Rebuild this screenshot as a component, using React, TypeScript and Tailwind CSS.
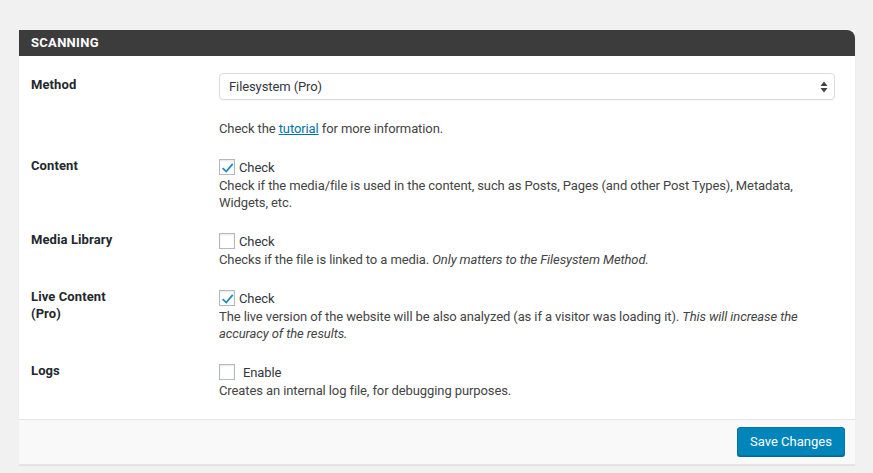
import React from "react";

const font = { fontFamily: 'Roboto, "Noto Sans", "Liberation Sans", sans-serif' };

function Box({ checked }: { checked?: boolean }) {
  return (
    <span className="relative inline-block w-[16px] h-[16px] border border-[#b4b9be] bg-white shadow-[inset_0_1px_2px_rgba(0,0,0,0.1)] shrink-0">
      {checked && (
        <svg viewBox="0 0 20 20" className="absolute left-[-2px] top-[-2px] w-[19px] h-[19px]">
          <path d="M14.8 5.6 8.6 12.9 5.4 10 4.2 11.4 8.8 15.6 16.2 6.9z" fill="#1e8cbe" />
        </svg>
      )}
    </span>
  );
}

function Row({ label, children }: { label: React.ReactNode; children: React.ReactNode }) {
  return (
    <div className="flex">
      <div className="w-[200px] pl-[12px] shrink-0 text-[13px] leading-[17px] font-bold tracking-[0.1px] text-[#23282d]">{label}</div>
      <div className="flex-1 pr-[20px] text-[13px] leading-[17px] tracking-[-0.1px] text-[#444]">{children}</div>
    </div>
  );
}

export default function App() {
  return (
    <div className="w-[873px] h-[473px] bg-[#f1f1f1] pt-[30px] pl-[19px]" style={font}>
      <div className="w-[836px] bg-white shadow-[0_1px_1px_rgba(0,0,0,0.06)] border-b border-[#e5e5e5]">
        <div className="h-[26px] bg-[#3c3c3c] rounded-tr-[8px] flex items-center pl-[12px] text-white font-bold text-[13px] tracking-[0.3px]">
          SCANNING
        </div>
        <div className="pt-[17px] pb-[20px] flex flex-col gap-[20px]">
          <Row label={<div className="mt-[3px]">Method</div>}>
            <div className="h-[27px] border border-[#dddddd] rounded-[4px] bg-white flex items-center pl-[9px] pr-[6px] text-[#32373c] shadow-[0_1px_1px_rgba(0,0,0,0.04)]">
              <span className="flex-1">Filesystem (Pro)</span>
              <svg width="8" height="12" viewBox="0 0 8 12">
                <path d="M4 0.5 7.5 5H0.5z" fill="#444" />
                <path d="M0.5 7h7L4 11.5z" fill="#444" />
              </svg>
            </div>
            <div className="mt-[20px]">
              Check the <a className="text-[#0073aa] underline">tutorial</a> for more information.
            </div>
          </Row>
          <Row label="Content">
            <div className="h-[20px] flex items-center gap-[4px] text-[#32373c]">
              <Box checked />
              <span>Check</span>
            </div>
            <div>
              Check if the media/file is used in the content, such as Posts, Pages (and other Post Types), Metadata,
              <br />
              Widgets, etc.
            </div>
          </Row>
          <Row label="Media Library">
            <div className="h-[20px] flex items-center gap-[4px] text-[#32373c]">
              <Box />
              <span>Check</span>
            </div>
            <div>
              Checks if the file is linked to a media. <i>Only matters to the Filesystem Method.</i>
            </div>
          </Row>
          <Row label={<div>Live Content<br />(Pro)</div>}>
            <div className="h-[20px] flex items-center gap-[4px] text-[#32373c]">
              <Box checked />
              <span>Check</span>
            </div>
            <div>
              The live version of the website will be also analyzed (as if a visitor was loading it). <i>This will increase the</i>
              <br />
              <i>accuracy of the results.</i>
            </div>
          </Row>
          <Row label="Logs">
            <div className="h-[20px] flex items-center gap-[8px] text-[#32373c]">
              <Box />
              <span>Enable</span>
            </div>
            <div>Creates an internal log file, for debugging purposes.</div>
          </Row>
        </div>
        <div className="h-[45px] bg-[#f9f9f9] border-t border-[#e5e5e5] flex items-start justify-end pr-[10px] pt-[7px]">
          <button className="h-[29px] w-[108px] bg-[#0085ba] rounded-[3px] text-white text-[13px] border border-[#0073aa] shadow-[0_1px_0_#006799]">
            Save Changes
          </button>
        </div>
      </div>
    </div>
  );
}
